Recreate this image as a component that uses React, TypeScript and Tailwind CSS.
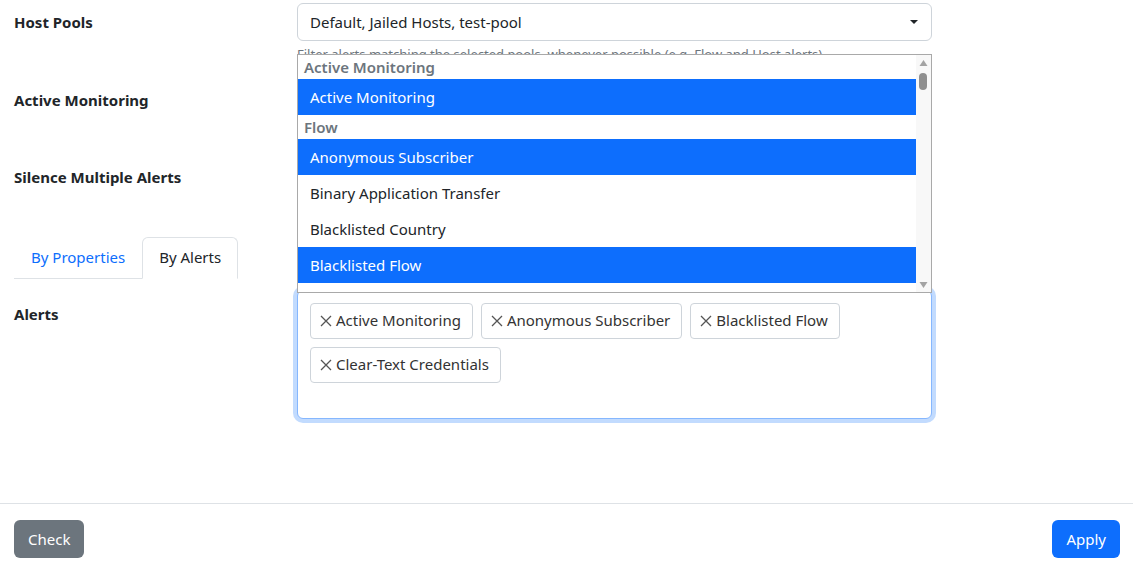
import React from "react";

const font = { fontFamily: '"Noto Sans", "Segoe UI", sans-serif' };

function X() {
  return (
    <svg width="14" height="14" viewBox="0 0 14 14" className="mr-[3px] shrink-0">
      <path d="M2 2 L12 12 M12 2 L2 12" stroke="#555" strokeWidth="1.3" fill="none" />
    </svg>
  );
}

function Tag({ label }: { label: string }) {
  return (
    <div className="flex h-[36px] items-center rounded-[4px] border border-[#ced4da] bg-white pl-[8px] pr-[11px] text-[15px] text-[#333]">
      <X />
      <span>{label}</span>
    </div>
  );
}

function Option({ label, selected }: { label: string; selected?: boolean }) {
  return (
    <div
      className={
        "flex h-[36px] shrink-0 items-center pl-[12px] text-[15px] " +
        (selected ? "bg-[#0d6efd] text-white" : "bg-white text-[#212529]")
      }
    >
      {label}
    </div>
  );
}

function Group({ label }: { label: string }) {
  return (
    <div className="flex h-[24px] shrink-0 items-center pl-[6px] text-[15px] font-semibold text-[#6c757d]">
      {label}
    </div>
  );
}

export default function App() {
  return (
    <div className="relative h-[569px] w-full overflow-hidden bg-white text-[#212529]" style={font}>
      <div className="flex flex-col pl-[14px]">
        {/* Host Pools */}
        <div className="flex pt-[3px]">
          <div className="w-[283px] pt-[8px] text-[15px] font-bold">Host Pools</div>
          <div className="flex w-[635px] flex-col">
            <div className="flex h-[38px] items-center justify-between rounded-[6px] border border-[#ced4da] pl-[12px] pr-[12px] text-[15px]">
              <span>Default, Jailed Hosts, test-pool</span>
              <svg width="10" height="6" viewBox="0 0 10 6">
                <path d="M1 1 L9 1 L5 5 Z" fill="#212529" />
              </svg>
            </div>
            <div className="mt-[4px] whitespace-nowrap text-[13px] text-[#6c757d]">
              Filter alerts matching the selected pools, whenever possible (e.g. Flow and Host alerts)
            </div>
          </div>
        </div>
        {/* Active Monitoring */}
        <div className="mt-[24px] flex h-[24px] items-center text-[15px] font-bold">Active Monitoring</div>
        {/* Silence */}
        <div className="mt-[53px] flex h-[24px] items-center text-[15px] font-bold">Silence Multiple Alerts</div>
        {/* Tabs */}
        <div className="mt-[47px] flex">
          <div className="flex border-b border-[#dee2e6]">
            <div className="flex h-[41px] items-center px-[17px] text-[15px] text-[#0d6efd]">By Properties</div>
            <div className="-mb-px flex h-[42px] items-center rounded-t-[6px] border border-b-white border-[#dee2e6] bg-white px-[16px] text-[15px]">
              By Alerts
            </div>
          </div>
        </div>
        {/* Alerts */}
        <div className="mt-[11px] flex">
          <div className="w-[283px] pt-[13px] text-[15px] font-bold">Alerts</div>
          <div className="h-[129px] w-[635px] rounded-[6px] border border-[#86b7fe] bg-white shadow-[0_0_0_4px_rgba(13,110,253,0.25)]">
            <div className="flex flex-wrap gap-[8px] pl-[12px] pr-[12px] pt-[12px]">
              <Tag label="Active Monitoring" />
              <Tag label="Anonymous Subscriber" />
              <Tag label="Blacklisted Flow" />
              <Tag label="Clear-Text Credentials" />
            </div>
          </div>
        </div>
      </div>

      {/* Dropdown listbox overlay */}
      <div className="absolute left-[297px] top-[54px] flex h-[239px] w-[635px] overflow-hidden border border-[#a9a9a9] bg-white">
        <div className="flex flex-1 flex-col">
          <Group label="Active Monitoring" />
          <Option label="Active Monitoring" selected />
          <Group label="Flow" />
          <Option label="Anonymous Subscriber" selected />
          <Option label="Binary Application Transfer" />
          <Option label="Blacklisted Country" />
          <Option label="Blacklisted Flow" selected />
        </div>
        <div className="relative w-[15px] bg-[#f8f8f8]">
          <svg className="absolute left-[3px] top-[4px]" width="9" height="8" viewBox="0 0 9 8">
            <path d="M4.5 1 L8.5 7 L0.5 7 Z" fill="#a3a3a3" />
          </svg>
          <div className="absolute left-[3px] top-[18px] h-[17px] w-[8px] rounded-full bg-[#8f8f8f]" />
          <svg className="absolute bottom-[3px] left-[3px]" width="9" height="8" viewBox="0 0 9 8">
            <path d="M0.5 1 L8.5 1 L4.5 7 Z" fill="#a3a3a3" />
          </svg>
        </div>
      </div>

      {/* Footer */}
      <div className="absolute left-0 right-0 top-[503px] border-t border-[#dee2e6]" />
      <div className="absolute left-[14px] right-[13px] top-[520px] flex justify-between">
        <button className="h-[38px] rounded-[6px] bg-[#6c757d] px-[14px] text-[15px] text-white">Check</button>
        <button className="h-[38px] rounded-[6px] bg-[#0d6efd] px-[14px] text-[15px] text-white">Apply</button>
      </div>
    </div>
  );
}
